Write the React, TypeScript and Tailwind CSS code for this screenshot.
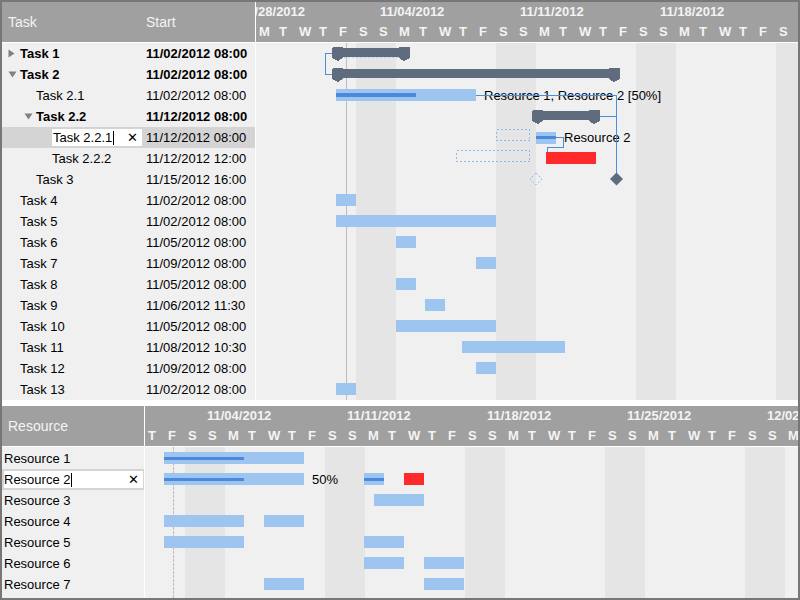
import React from 'react';

const ROW = 21;

type Task = {
  name: string;
  start: string;
  level: number;
  bold?: boolean;
  arrow?: 'right' | 'down';
  editing?: boolean;
};

const tasks: Task[] = [
  { name: 'Task 1', start: '11/02/2012 08:00', level: 0, bold: true, arrow: 'right' },
  { name: 'Task 2', start: '11/02/2012 08:00', level: 0, bold: true, arrow: 'down' },
  { name: 'Task 2.1', start: '11/02/2012 08:00', level: 1 },
  { name: 'Task 2.2', start: '11/12/2012 08:00', level: 1, bold: true, arrow: 'down' },
  { name: 'Task 2.2.1', start: '11/12/2012 08:00', level: 2, editing: true },
  { name: 'Task 2.2.2', start: '11/12/2012 12:00', level: 2 },
  { name: 'Task 3', start: '11/15/2012 16:00', level: 1 },
  { name: 'Task 4', start: '11/02/2012 08:00', level: 0 },
  { name: 'Task 5', start: '11/02/2012 08:00', level: 0 },
  { name: 'Task 6', start: '11/05/2012 08:00', level: 0 },
  { name: 'Task 7', start: '11/09/2012 08:00', level: 0 },
  { name: 'Task 8', start: '11/05/2012 08:00', level: 0 },
  { name: 'Task 9', start: '11/06/2012 11:30', level: 0 },
  { name: 'Task 10', start: '11/05/2012 08:00', level: 0 },
  { name: 'Task 11', start: '11/08/2012 10:30', level: 0 },
  { name: 'Task 12', start: '11/09/2012 08:00', level: 0 },
  { name: 'Task 13', start: '11/02/2012 08:00', level: 0 },
];

const resources = ['Resource 1', 'Resource 2', 'Resource 3', 'Resource 4', 'Resource 5', 'Resource 6', 'Resource 7'];

// simple bars in the task chart: [row, x1, x2]
const taskBars: [number, number, number][] = [
  [7, 80, 100],
  [8, 80, 240],
  [9, 140, 160],
  [10, 220, 240],
  [11, 140, 160],
  [12, 169, 189],
  [13, 140, 240],
  [14, 206, 309],
  [15, 220, 240],
  [16, 80, 100],
];

// resource chart bars: [row, x1, x2, progress?]
const resBars: [number, number, number, boolean][] = [
  [0, 19, 159, true],
  [1, 19, 159, true],
  [1, 219, 239, true],
  [2, 229, 279, false],
  [3, 19, 99, false],
  [3, 119, 159, false],
  [4, 19, 99, false],
  [4, 219, 259, false],
  [5, 219, 259, false],
  [5, 279, 319, false],
  [6, 119, 159, false],
  [6, 279, 319, false],
];

const BAR = '#9ec5ef';
const PROG = '#4a89dc';
const SUM = '#5f6c7e';
const RED = '#ff2b2b';
const LINK = '#4a8ee0';

function Summary({ x1, x2, y }: { x1: number; x2: number; y: number }) {
  return (
    <g fill={SUM}>
      <rect x={x1} y={y + 1} width={x2 - x1} height={9} />
      <path d={`M${x1} ${y + 2} Q${x1} ${y} ${x1 + 2} ${y} H${x1 + 11} V${y + 11} L${x1 + 6} ${y + 14} L${x1} ${y + 11} Z`} />
      <path d={`M${x2} ${y + 2} Q${x2} ${y} ${x2 - 2} ${y} H${x2 - 11} V${y + 11} L${x2 - 6} ${y + 14} L${x2} ${y + 11} Z`} />
    </g>
  );
}

function WeekendCells({ count, weekend }: { count: number; weekend: (i: number) => boolean }) {
  return (
    <>
      {Array.from({ length: count }).map((_, i) => (
        <div key={i} className={`w-[20px] shrink-0 ${weekend(i) ? 'bg-[#e5e5e5]' : ''}`} />
      ))}
    </>
  );
}

function TaskGrid() {
  return (
    <div className="w-[253px] shrink-0 flex flex-col">
      <div className="h-[40px] bg-[#a0a0a0] flex items-center text-[14px] text-[#f4f4f4]">
        <div className="w-[144px] pl-[6px]">Task</div>
        <div className="flex-1">Start</div>
      </div>
      <div className="h-px bg-white" />
      <div className="flex-1 bg-[#f0f0f0]">
        {tasks.map((t, i) => (
          <div key={i} className={`h-[21px] flex items-center text-[13px] text-black ${t.editing ? 'bg-[#d4d4d4]' : ''}`}>
            <div className="w-[144px] shrink-0 flex items-center" style={{ paddingLeft: 6 + 16 * t.level }}>
              <div className="w-[12px] shrink-0 flex items-center">
                {t.arrow === 'right' && (
                  <svg width="7" height="9" viewBox="0 0 7 9"><path d="M0.5 0.5 L6.5 4.5 L0.5 8.5 Z" fill="#808080" /></svg>
                )}
                {t.arrow === 'down' && (
                  <svg width="9" height="7" viewBox="0 0 9 7"><path d="M0.5 0.5 H8.5 L4.5 6.5 Z" fill="#808080" /></svg>
                )}
              </div>
              {t.editing ? (
                <div className="w-[90px] h-[17px] bg-white flex items-center pl-px">
                  <span>{t.name}</span>
                  <span className="w-px h-[14px] bg-black ml-px" />
                  <span className="ml-auto mr-[4px] text-[13px] leading-none">✕</span>
                </div>
              ) : (
                <span className={t.bold ? 'font-bold' : ''}>{t.name}</span>
              )}
            </div>
            <div className={`flex-1 ${t.bold ? 'font-bold' : ''}`}>{t.start}</div>
          </div>
        ))}
      </div>
    </div>
  );
}

function TaskChart() {
  const days = 28;
  const weekend = (i: number) => i % 7 === 5 || i % 7 === 6;
  const letters = 'MTWTFSS';
  const weeks = ['10/28/2012', '11/04/2012', '11/11/2012', '11/18/2012'];
  return (
    <div className="flex-1 flex flex-col overflow-hidden">
      <div className="h-[40px] bg-[#a0a0a0] flex flex-col text-[13px] font-bold text-[#f4f4f4]">
        <div className="h-[19px] flex items-center whitespace-nowrap">
          {weeks.map((w, i) => (
            <div key={w} className={`w-[140px] shrink-0 pl-[4px] ${i === 0 ? 'ml-[-20px]' : ''}`}>{w}</div>
          ))}
        </div>
        <div className="h-[21px] flex items-center">
          {Array.from({ length: days - 1 }).map((_, i) => (
            <div key={i} className="w-[20px] shrink-0 pl-[3px]">{letters[i % 7]}</div>
          ))}
        </div>
      </div>
      <div className="h-px bg-white" />
      <div className="relative flex-1 flex bg-[#f0f0f0]">
        <WeekendCells count={days} weekend={weekend} />
        <span className="absolute left-[228px] top-[42px] h-[21px] flex items-center text-[13px] text-black whitespace-nowrap">
          Resource 1, Resource 2 [50%]
        </span>
        <span className="absolute left-[308px] top-[84px] h-[21px] flex items-center text-[13px] text-black whitespace-nowrap">
          Resource 2
        </span>
        <svg className="absolute inset-0" width="542" height="357" shapeRendering="crispEdges">
          <line x1="90.5" y1="0" x2="90.5" y2="357" stroke="#bdbdbd" />
          {/* Task 1 */}
          <line x1="84" y1="14.5" x2="146" y2="14.5" stroke="#b8d4f4" strokeDasharray="2 2" />
          <Summary x1={76} x2={154} y={4} />
          <path d="M76 10.5 H69.5 V31.5 H76" fill="none" stroke={LINK} />
          {/* Task 2 */}
          <Summary x1={76} x2={364} y={25} />
          {/* Task 2.1 */}
          <rect x="80" y={ROW * 2 + 4} width="140" height="12" fill={BAR} />
          <rect x="80" y={ROW * 2 + 8} width="80" height="4" fill={PROG} />
          <path d={`M220 ${ROW * 2 + 10.5} H360.5 V130`} fill="none" stroke={LINK} />
          {/* Task 2.2 */}
          <Summary x1={276} x2={344} y={ROW * 3 + 4} />
          <path d={`M344 ${ROW * 3 + 10.5} H360`} fill="none" stroke={LINK} />
          {/* Task 2.2.1 */}
          <rect x="240.5" y={ROW * 4 + 2.5} width="33" height="11" fill="none" stroke="#8fb9ec" strokeDasharray="2 2" />
          <rect x="280" y={ROW * 4 + 5} width="20" height="12" fill={BAR} />
          <rect x="280" y={ROW * 4 + 9} width="20" height="3" fill={PROG} />
          <path d={`M300 ${ROW * 4 + 10.5} H307.5 V${ROW * 4 + 20.5} H291.5 V${ROW * 5 + 4}`} fill="none" stroke={LINK} />
          {/* Task 2.2.2 */}
          <rect x="200.5" y={ROW * 5 + 2.5} width="73" height="11" fill="none" stroke="#8fb9ec" strokeDasharray="2 2" />
          <rect x="290" y={ROW * 5 + 4} width="50" height="12" fill={RED} />
          {/* Task 3 */}
          <path d="M280 130 L286 136 L280 142 L274 136 Z" fill="none" stroke="#8fb9ec" strokeDasharray="2 2" shapeRendering="auto" />
          <path d="M360.5 129.5 L367 136 L360.5 142.5 L354 136 Z" fill={SUM} shapeRendering="auto" />
          {taskBars.map(([r, a, b], i) => (
            <rect key={i} x={a} y={r * ROW + 4} width={b - a} height="12" fill={BAR} />
          ))}
        </svg>
      </div>
    </div>
  );
}

function ResourceGrid() {
  return (
    <div className="w-[142px] shrink-0 flex flex-col">
      <div className="h-[40px] bg-[#a0a0a0] flex items-center pl-[6px] text-[14px] text-[#f4f4f4]">Resource</div>
      <div className="h-px bg-white" />
      <div className="flex-1 bg-[#f0f0f0] pt-px">
        {resources.map((r, i) =>
          i === 1 ? (
            <div key={r} className="h-[21px] bg-[#d4d4d4] flex items-center pl-[2px] pr-px">
              <div className="flex-1 h-[17px] bg-white flex items-center text-[13px] text-black">
                <span>{r}</span>
                <span className="w-px h-[14px] bg-black ml-px" />
                <span className="ml-auto mr-[4px] leading-none">✕</span>
              </div>
            </div>
          ) : (
            <div key={r} className="h-[21px] flex items-center pl-[2px] text-[13px] text-black">{r}</div>
          )
        )}
      </div>
    </div>
  );
}

function ResourceChart() {
  const days = 33;
  // first cell is Thursday
  const letters = 'TFSSMTW';
  const weekend = (i: number) => i % 7 === 2 || i % 7 === 3;
  const weeks = ['11/04/2012', '11/11/2012', '11/18/2012', '11/25/2012', '12/02/2012'];
  return (
    <div className="flex-1 flex flex-col overflow-hidden">
      <div className="h-[40px] bg-[#a0a0a0] flex flex-col text-[13px] font-bold text-[#f4f4f4]">
        <div className="h-[19px] flex items-center whitespace-nowrap">
          <div className="w-[60px] shrink-0" />
          {weeks.map((w) => (
            <div key={w} className="w-[140px] shrink-0 pl-[2px]">{w}</div>
          ))}
        </div>
        <div className="h-[21px] flex items-center">
          {Array.from({ length: days }).map((_, i) => (
            <div key={i} className="w-[20px] shrink-0 pl-[3px]">{letters[i % 7]}</div>
          ))}
        </div>
      </div>
      <div className="h-px bg-white" />
      <div className="relative flex-1 flex bg-[#f0f0f0]">
        <WeekendCells count={days} weekend={weekend} />
        <span className="absolute left-[167px] top-[22px] h-[21px] flex items-center text-[13px] text-black">50%</span>
        <svg className="absolute inset-0" width="653" height="151" shapeRendering="crispEdges">
          <line x1="28.5" y1="0" x2="28.5" y2="151" stroke="#bdbdbd" strokeDasharray="3 1" />
          {resBars.map(([r, a, b, p], i) => (
            <g key={i}>
              <rect x={a} y={r * ROW + 5} width={b - a} height="12" fill={BAR} />
              {p && <rect x={a} y={r * ROW + 10} width={b - a === 140 ? 80 : b - a} height="3" fill={PROG} />}
            </g>
          ))}
          <rect x="259" y={ROW + 5} width="20" height="12" fill={RED} />
        </svg>
      </div>
    </div>
  );
}

export default function App() {
  return (
    <div className="w-[800px] h-[600px] bg-[#777777] p-[2px] font-['Liberation_Sans',Arial,sans-serif]">
      <div className="w-full h-full flex flex-col bg-white">
        <div className="h-[398px] flex">
          <TaskGrid />
          <div className="w-px bg-white" />
          <TaskChart />
        </div>
        <div className="h-[6px] bg-white" />
        <div className="flex-1 flex">
          <ResourceGrid />
          <div className="w-px bg-white" />
          <ResourceChart />
        </div>
      </div>
    </div>
  );
}
